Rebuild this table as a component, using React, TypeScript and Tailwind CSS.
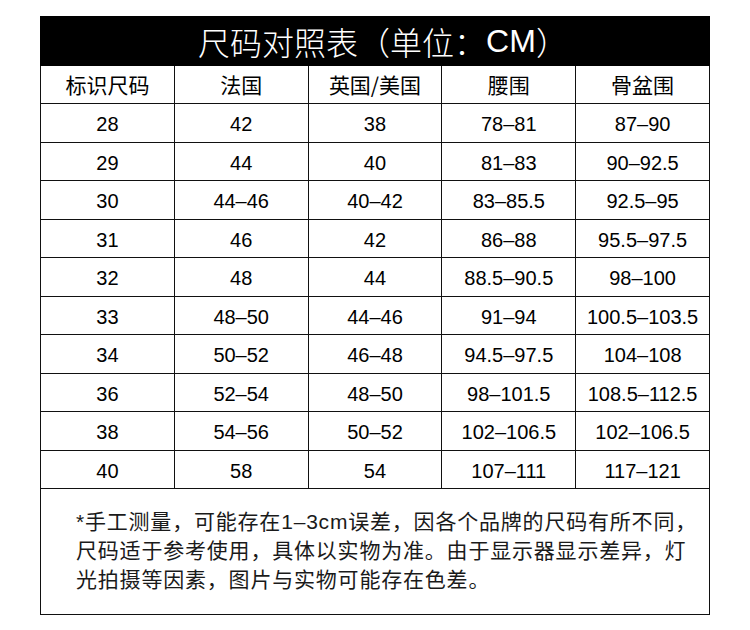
type SizeRow = {
  tag: string;
  fr: string;
  ukus: string;
  waist: string;
  hip: string;
};

const rows: SizeRow[] = [
  { tag: "28", fr: "42", ukus: "38", waist: "78–81", hip: "87–90" },
  { tag: "29", fr: "44", ukus: "40", waist: "81–83", hip: "90–92.5" },
  { tag: "30", fr: "44–46", ukus: "40–42", waist: "83–85.5", hip: "92.5–95" },
  { tag: "31", fr: "46", ukus: "42", waist: "86–88", hip: "95.5–97.5" },
  { tag: "32", fr: "48", ukus: "44", waist: "88.5–90.5", hip: "98–100" },
  { tag: "33", fr: "48–50", ukus: "44–46", waist: "91–94", hip: "100.5–103.5" },
  { tag: "34", fr: "50–52", ukus: "46–48", waist: "94.5–97.5", hip: "104–108" },
  { tag: "36", fr: "52–54", ukus: "48–50", waist: "98–101.5", hip: "108.5–112.5" },
  { tag: "38", fr: "54–56", ukus: "50–52", waist: "102–106.5", hip: "102–106.5" },
  { tag: "40", fr: "58", ukus: "54", waist: "107–111", hip: "117–121" },
];

const headers = ["标识尺码", "法国", "英国/美国", "腰围", "骨盆围"];

export default function App() {
  return (
    <div className="min-h-[630px] w-[750px] bg-white pt-[16px] font-['Liberation_Sans','Noto_Sans_CJK_SC',sans-serif] text-black">
      <div className="mx-auto w-[670px]">
        <div className="flex h-[50px] items-center justify-center bg-black pl-[16px] font-['Noto_Sans_CJK_SC',sans-serif] text-[32px] font-light text-white">
          尺码对照表（单位：<span className="font-['Liberation_Sans',sans-serif] font-normal">CM</span>）
        </div>
        <div className="border-l-[1.5px] border-[#111]">
          <div className="grid h-[38px] grid-cols-5">
            {headers.map((h) => (
              <div
                key={h}
                className="flex items-center justify-center border-b-[1.5px] border-r-[1.5px] border-[#111] font-['Noto_Sans_CJK_SC',sans-serif] text-[21px]"
              >
                {h}
              </div>
            ))}
          </div>
          {rows.map((r) => (
            <div key={r.tag} className="grid h-[38.5px] grid-cols-5 text-[20px]">
              {[r.tag, r.fr, r.ukus, r.waist, r.hip].map((v, i) => (
                <div
                  key={i}
                  className="flex items-center justify-center border-b-[1.5px] border-r-[1.5px] border-[#111] pt-[3px]"
                >
                  {v}
                </div>
              ))}
            </div>
          ))}
          <div className="h-[126px] border-b-[1.5px] border-r-[1.5px] border-[#111] pl-[35px] pt-[18px] text-[21px] leading-[29px] tracking-[0.8px] text-[#1a1a1a]">
            *手工测量，可能存在1–3cm误差，因各个品牌的尺码有所不同，
            <br />
            尺码适于参考使用，具体以实物为准。由于显示器显示差异，灯
            <br />
            光拍摄等因素，图片与实物可能存在色差。
          </div>
        </div>
      </div>
    </div>
  );
}
